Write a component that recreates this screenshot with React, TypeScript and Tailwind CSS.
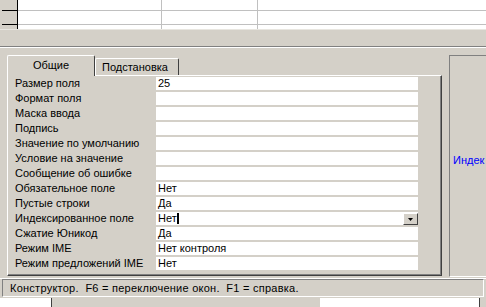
import React from 'react';

const rows: [string, string][] = [
  ['Размер поля', '25'],
  ['Формат поля', ''],
  ['Маска ввода', ''],
  ['Подпись', ''],
  ['Значение по умолчанию', ''],
  ['Условие на значение', ''],
  ['Сообщение об ошибке', ''],
  ['Обязательное поле', 'Нет'],
  ['Пустые строки', 'Да'],
  ['Индексированное поле', 'Нет'],
  ['Сжатие Юникод', 'Да'],
  ['Режим IME', 'Нет контроля'],
  ['Режим предложений IME', 'Нет'],
];

function GridRow({ h, last }: { h: number; last?: boolean }) {
  return (
    <div className="flex" style={{ height: h }}>
      <div className="w-[2px] bg-[#d4d0c8]" />
      <div className={'w-[16px] bg-[#d4d0c8] border-r border-black ' + (last ? '' : 'border-b border-b-black')} />
      <div className={'w-[144px] border-r border-[#c0c0c0] ' + (last ? '' : 'border-b')} />
      <div className={'w-[96px] border-r border-[#c0c0c0] ' + (last ? '' : 'border-b')} />
      <div className={'flex-1 border-[#c0c0c0] ' + (last ? '' : 'border-b')} />
    </div>
  );
}

function DropButton() {
  return (
    <div className="ml-auto self-end w-[15px] h-[12px] bg-[#d4d0c8] border-t border-l border-t-white border-l-white border-r border-b border-r-[#404040] border-b-[#404040] flex items-center justify-center">
      <svg width="5" height="3" viewBox="0 0 5 3">
        <path d="M0 0h5L2.5 3z" fill="#000" />
      </svg>
    </div>
  );
}

export default function App() {
  return (
    <div
      className="w-[486px] h-[307px] bg-[#d4d0c8] overflow-hidden text-[11px] text-black flex flex-col"
      style={{ fontFamily: '"Liberation Sans", Arial, sans-serif' }}
    >
      {/* field grid */}
      <div className="bg-white flex flex-col">
        <GridRow h={11} />
        <GridRow h={14} />
        <GridRow h={4} last />
      </div>
      <div className="h-px bg-[#e8e6e0]" />
      <div className="h-[16px]" />
      <div className="h-px bg-[#808080]" />
      <div className="h-px bg-white" />

      {/* properties pane */}
      <div className="flex pl-[7px] pt-[7px] h-[230px]">
        <div className="w-[435px] flex flex-col">
          <div className="flex items-end h-[20px]">
            <div className="relative z-10 -mb-px w-[88px] h-[21px] bg-[#d4d0c8] border-t border-l border-t-white border-l-white border-r border-r-[#404040] rounded-t-[2px] flex justify-center pt-[3px] leading-[13px]">
              Общие
            </div>
            <div className="w-[84px] h-[17px] border-t border-l border-t-white border-l-white border-r border-r-[#404040] rounded-t-[2px] pl-[6px] pt-[2px] leading-[13px]">
              Подстановка
            </div>
          </div>
          <div className="border-t border-l border-t-white border-l-white border-r border-b border-r-[#404040] border-b-[#404040]">
            <div className="border-r border-b border-r-[#808080] border-b-[#808080] pt-px pb-[4px] flex flex-col gap-[2px]">
              {rows.map(([label, value], i) => (
                <div key={label} className="flex h-[13px] leading-[13px]">
                  <div className="w-[148px] pl-[7px] whitespace-nowrap">{label}</div>
                  <div className="w-[262px] bg-white pl-[2px] flex whitespace-nowrap">
                    <span>{value}</span>
                    {i === 9 && <span className="w-[2px] h-[11px] mt-px bg-black" />}
                    {i === 9 && <DropButton />}
                  </div>
                </div>
              ))}
            </div>
          </div>
        </div>
        <div className="ml-[7px] flex-1 h-[222px] border-t border-l border-[#808080] border-b border-b-white overflow-hidden">
          <div className="pt-[98px] pl-[3px] text-[#0000ff] whitespace-nowrap leading-[13px]">Индек</div>
        </div>
      </div>

      {/* status bar */}
      <div className="h-px bg-white" />
      <div className="h-[18px] mx-[2px] border-t border-l border-t-[#808080] border-l-[#808080] border-b border-r border-b-white border-r-white flex items-center pl-[7px] whitespace-pre leading-[13px] tracking-[0.25px]">
        Конструктор.  F6 = переключение окон.  F1 = справка.
      </div>
      <div className="h-px" />
      <div className="flex flex-1">
        <div className="w-[52px] bg-white border-r border-[#404040]" />
        <div className="w-[268px]" />
        <div className="w-[160px] bg-white border-r border-[#404040]" />
      </div>
    </div>
  );
}
